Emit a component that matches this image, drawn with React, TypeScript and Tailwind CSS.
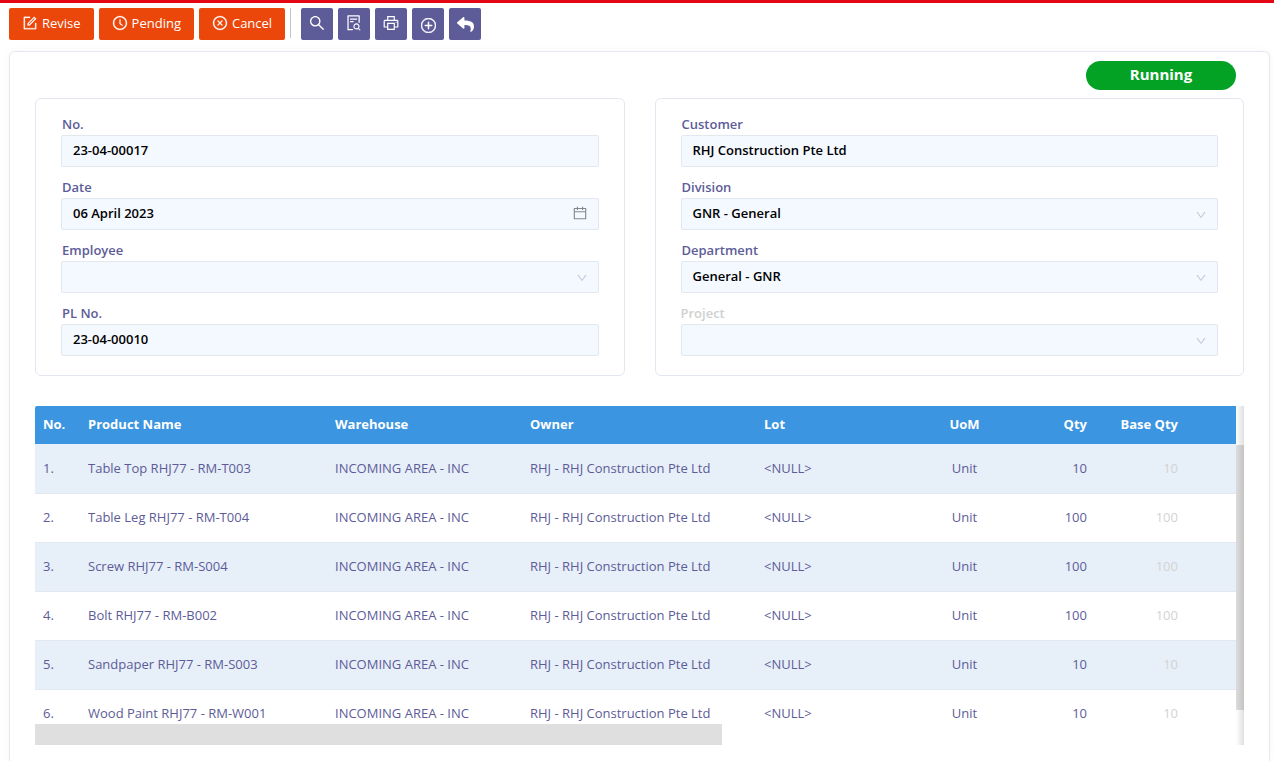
import type { ReactNode } from 'react'
import clsx from 'clsx'
import {
  AiOutlineCalendar,
  AiOutlineClockCircle,
  AiOutlineCloseCircle,
  AiOutlineDown,
  AiOutlineFileSearch,
  AiOutlineForm,
  AiOutlinePrinter,
  AiOutlineSearch,
} from 'react-icons/ai'
import { BsPlusCircle } from 'react-icons/bs'
import { FaReply } from 'react-icons/fa'

const items = [
  { name: 'Table Top RHJ77 - RM-T003', qty: 10 },
  { name: 'Table Leg RHJ77 - RM-T004', qty: 100 },
  { name: 'Screw RHJ77 - RM-S004', qty: 100 },
  { name: 'Bolt RHJ77 - RM-B002', qty: 100 },
  { name: 'Sandpaper RHJ77 - RM-S003', qty: 10 },
  { name: 'Wood Paint RHJ77 - RM-W001', qty: 10 },
]

function ActionButton({ icon, children }: { icon: ReactNode; children: ReactNode }) {
  return (
    <button className="flex h-8 items-center gap-1 rounded-xs bg-[#eb470b] px-[13px] text-[13px] font-medium text-white">
      {icon}
      {children}
    </button>
  )
}

function IconButton({ label, children }: { label: string; children: ReactNode }) {
  return (
    <button
      aria-label={label}
      className="flex size-8 items-center justify-center rounded-xs bg-[#5d5c98] text-white"
    >
      {children}
    </button>
  )
}

type FieldProps = {
  id: string
  label: string
  value?: string
  type?: 'text' | 'date' | 'select'
  muted?: boolean
}

function Field({ id, label, value = '', type = 'text', muted }: FieldProps) {
  const control =
    'block h-8 w-full appearance-none rounded-xs border border-[#e2e7f0] bg-[#f4f8ff] px-[11px] text-[13px] font-semibold text-black outline-none'

  return (
    <div>
      <label
        htmlFor={id}
        className={clsx(
          'block h-5 text-[13px] leading-[18px] font-semibold',
          muted ? 'text-[#d0d0d0]' : 'pl-px text-[#5d5c98]'
        )}
      >
        {label}
      </label>
      <div className="relative">
        {type === 'select' ? (
          <select id={id} defaultValue={value} className={control}>
            <option value={value}>{value}</option>
          </select>
        ) : (
          <input id={id} type="text" defaultValue={value} className={clsx(control, 'pb-0.5')} />
        )}
        {type === 'select' && (
          <AiOutlineDown className="pointer-events-none absolute top-[11px] right-[11px] size-3 text-[#c0c2d8]" />
        )}
        {type === 'date' && (
          <AiOutlineCalendar className="pointer-events-none absolute top-[7px] right-[11px] size-4 text-[#85878b]" />
        )}
      </div>
    </div>
  )
}

export default function App() {
  return (
    <div className="flex h-screen flex-col overflow-hidden border-t-3 border-[#e30613] bg-white font-['Open_Sans',sans-serif] text-[13px] text-[#5d5c98]">
      <header className="flex gap-[5px] px-[9px] pt-[5px]">
        <ActionButton icon={<AiOutlineForm className="mb-0.5 size-4" stroke="currentColor" strokeWidth={15} />}>
          Revise
        </ActionButton>
        <ActionButton icon={<AiOutlineClockCircle className="mb-0.5 size-4" stroke="currentColor" strokeWidth={15} />}>
          Pending
        </ActionButton>
        <ActionButton icon={<AiOutlineCloseCircle className="mb-0.5 size-4" stroke="currentColor" strokeWidth={15} />}>
          Cancel
        </ActionButton>
        <div className="mr-[5px] h-[30px] w-px bg-[#c4c4c4]" />
        <IconButton label="Search"><AiOutlineSearch className="mb-0.5 size-[18px]" /></IconButton>
        <IconButton label="Preview"><AiOutlineFileSearch className="mb-0.5 size-[18px]" /></IconButton>
        <IconButton label="Print"><AiOutlinePrinter className="mb-0.5 size-[18px]" /></IconButton>
        <IconButton label="Add"><BsPlusCircle className="mt-0.5 size-[15px]" strokeWidth={0.6} /></IconButton>
        <IconButton label="Back"><FaReply className="size-[17px]" /></IconButton>
      </header>

      <main className="mt-[11px] mr-1 ml-[9px] flex-1 rounded-t-md border border-b-0 border-[#e6e8f0] px-[25px] pt-[9px] shadow-[0_0_10px_rgba(0,0,0,0.04)]">
        <div className="flex justify-end pr-2">
          <span className="flex h-[29px] w-[150px] items-center justify-center rounded-full bg-[#04a224] pb-0.5 text-[15px] font-bold text-white">
            Running
          </span>
        </div>

        <form className="mt-2 grid grid-cols-2 gap-[30px]">
          <section className="flex flex-col gap-[11px] rounded-md border border-[#e2e7f0] px-[25px] pt-4 pb-[19px]">
            <Field id="no" label="No." value="23-04-00017" />
            <Field id="date" label="Date" value="06 April 2023" type="date" />
            <Field id="employee" label="Employee" type="select" />
            <Field id="pl-no" label="PL No." value="23-04-00010" />
          </section>
          <section className="flex flex-col gap-[11px] rounded-md border border-[#e2e7f0] px-[25px] pt-4 pb-[19px]">
            <Field id="customer" label="Customer" value="RHJ Construction Pte Ltd" />
            <Field id="division" label="Division" value="GNR - General" type="select" />
            <Field id="department" label="Department" value="General - GNR" type="select" />
            <Field id="project" label="Project" type="select" muted />
          </section>
        </form>

        <div className="relative mt-[30px] flex h-[339px] overflow-hidden">
          <div className="flex-1">
            <table className="w-full table-fixed text-left">
              <colgroup>
                <col className="w-[45px]" />
                <col className="w-[247px]" />
                <col className="w-[195px]" />
                <col className="w-[234px]" />
                <col className="w-[161px]" />
                <col className="w-[95px]" />
                <col className="w-[83px]" />
                <col className="w-[91px]" />
                <col />
              </colgroup>
              <thead>
                <tr className="h-[38px] bg-[#3b95e0] text-white">
                  <th className="rounded-tl-xs px-2 font-bold">No.</th>
                  <th className="px-2 font-bold">Product Name</th>
                  <th className="px-2 font-bold">Warehouse</th>
                  <th className="px-2 font-bold">Owner</th>
                  <th className="px-2 font-bold">Lot</th>
                  <th className="px-2 text-center font-bold">UoM</th>
                  <th className="px-2 text-right font-bold">Qty</th>
                  <th className="px-2 text-right font-bold">Base Qty</th>
                  <th />
                </tr>
              </thead>
              <tbody>
                {items.map((item, i) => (
                  <tr key={item.name} className="h-[49px] border-b border-[#e2e7f0] whitespace-nowrap odd:bg-[#e7eff8]">
                    <td className="px-2">{i + 1}.</td>
                    <td className="px-2">{item.name}</td>
                    <td className="px-2">INCOMING AREA - INC</td>
                    <td className="px-2">RHJ - RHJ Construction Pte Ltd</td>
                    <td className="px-2">&lt;NULL&gt;</td>
                    <td className="px-2 text-center">Unit</td>
                    <td className="px-2 text-right">{item.qty}</td>
                    <td className="px-2 text-right text-[#d3d3d3]">{item.qty}</td>
                    <td />
                  </tr>
                ))}
              </tbody>
            </table>
          </div>

          {/* scrollbars */}
          <div className="absolute inset-x-0 bottom-0 h-[21px] bg-white">
            <div className="h-full w-[56.8%] bg-[#dfdfdf]" />
          </div>
          <div className="relative w-2 bg-linear-to-r from-white to-[#e0e0e0] pt-[39px]">
            <div className="h-[265px] bg-linear-to-r from-[#dcdcdc] to-[#c4c4c4]" />
          </div>
        </div>
      </main>
    </div>
  )
}
